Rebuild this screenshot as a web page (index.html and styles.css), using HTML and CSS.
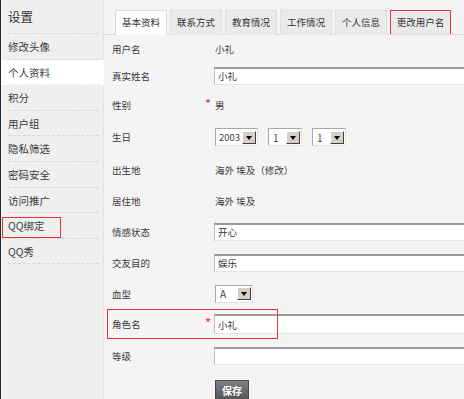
FILE: index.html
```html
<!DOCTYPE html>
<html lang="zh-CN">
  <head>
    <meta charset="UTF-8" />
    <meta name="viewport" content="width=device-width, initial-scale=1.0" />
    <title>设置 - 个人资料</title>
    <link rel="stylesheet" href="styles.css">
  </head>
  <body>
    <div class="page">
      <div class="side">
        <h2 class="side-title">设置</h2>
        <ul class="nav">
          <li><a href="#">修改头像</a></li>
          <li class="active"><a href="#">个人资料</a></li>
          <li><a href="#">积分</a></li>
          <li><a href="#">用户组</a></li>
          <li><a href="#">隐私筛选</a></li>
          <li><a href="#">密码安全</a></li>
          <li><a href="#">访问推广</a></li>
          <li class="marked"><a href="#">QQ绑定</a><span class="mark mark-nav"></span></li>
          <li><a href="#">QQ秀</a></li>
        </ul>
      </div>

      <div class="main">
        <ul class="tabs">
          <li class="tab active">基本资料</li>
          <li class="tab">联系方式</li>
          <li class="tab">教育情况</li>
          <li class="tab">工作情况</li>
          <li class="tab">个人信息</li>
          <li class="tab tab-wide tab-marked">更改用户名</li>
        </ul>

        <form class="form">
          <div class="row row-short">
            <span class="label">用户名</span>
            <span class="star"></span>
            <span class="value">小礼</span>
          </div>

          <div class="row row-short">
            <span class="label">真实姓名</span>
            <span class="star"></span>
            <input type="text" class="field" value="小礼" />
          </div>

          <div class="row">
            <span class="label">性别</span>
            <span class="star">*</span>
            <span class="value">男</span>
          </div>

          <div class="row row-tall">
            <span class="label">生日</span>
            <span class="star"></span>
            <div class="selects">
              <span class="select select-year"><span>2003</span><span class="select-btn"></span></span>
              <span class="select"><span>1</span><span class="select-btn"></span></span>
              <span class="select"><span>1</span><span class="select-btn"></span></span>
            </div>
          </div>

          <div class="row">
            <span class="label">出生地</span>
            <span class="star"></span>
            <span class="value">海外 埃及（修改）</span>
          </div>

          <div class="row">
            <span class="label">居住地</span>
            <span class="star"></span>
            <span class="value">海外 埃及</span>
          </div>

          <div class="row">
            <span class="label">情感状态</span>
            <span class="star"></span>
            <input type="text" class="field" value="开心" />
          </div>

          <div class="row">
            <span class="label">交友目的</span>
            <span class="star"></span>
            <input type="text" class="field" value="娱乐" />
          </div>

          <div class="row">
            <span class="label">血型</span>
            <span class="star"></span>
            <span class="select select-blood"><span>A</span><span class="select-btn"></span></span>
          </div>

          <div class="row row-role">
            <span class="label">角色名</span>
            <span class="star">*</span>
            <input type="text" class="field field-role" value="小礼" />
            <span class="mark mark-row"></span>
          </div>

          <div class="row row-tall">
            <span class="label">等级</span>
            <span class="star"></span>
            <input type="text" class="field" value="" />
          </div>

          <div class="actions">
            <button type="button" class="btn-save">保存</button>
          </div>
        </form>
      </div>
    </div>
  </body>
</html>
```

FILE: styles.css
```css
* {
  margin: 0;
  padding: 0;
  box-sizing: border-box;
  font-family: "Noto Sans CJK SC", "Liberation Sans", sans-serif;
}

body {
  width: 464px;
  height: 399px;
  overflow: hidden;
  background-color: #f4f4f4;
  color: #3a3a3a;
  font-size: 9.5px;
}

ul {
  list-style: none;
}

a {
  color: #3a3a3a;
  text-decoration: none;
}

.page {
  display: flex;
  height: 399px;
}

/* menu lateral */
.side {
  width: 104px;
  flex-shrink: 0;
  background-color: #efefef;
  border-left: 1px solid #2a2a2a;
  border-right: 1px solid #e2e2e2;
  font-size: 10.5px;
}

.side-title {
  height: 34px;
  line-height: 34px;
  margin: 0 4px 0 7px;
  font-size: 12.5px;
  font-weight: normal;
  color: #333;
  border-bottom: 1px dashed #d6d6d6;
}

.nav li {
  position: relative;
}

.nav li a {
  display: block;
  height: 25.6px;
  line-height: 25px;
  margin: 0 4px 0 7px;
  border-bottom: 1px dashed #d6d6d6;
}

.nav li.active {
  background-color: #fff;
  margin-right: -1px;
}

.nav li.active a {
  border-bottom-color: #eee;
}

.mark {
  position: absolute;
  border: 1px solid #e8333a;
  pointer-events: none;
}

.mark-nav {
  left: 1px;
  top: 4px;
  width: 59px;
  height: 21px;
}

/* conteúdo */
.main {
  flex: 1;
  overflow: hidden;
}

.tabs {
  display: flex;
  gap: 3px;
  height: 35px;
  padding: 10px 0 0 11px;
  border-bottom: 1px solid #dcdcdc;
}

.tab {
  width: 52px;
  height: 25px;
  line-height: 23px;
  text-align: center;
  white-space: nowrap;
  background-color: #eaeaea;
  border: 1px solid #dedede;
  border-bottom: none;
  color: #333;
}

.tab.active {
  background-color: #fff;
}

.tab-wide {
  width: 61px;
}

.tab-marked {
  border: 1px solid #e8333a;
  border-bottom: none;
  height: 24px;
}

.form {
  padding-left: 8px;
}

.row {
  position: relative;
  display: flex;
  align-items: center;
  height: 31px;
}

.row-short {
  height: 27px;
}

.row-tall {
  height: 34px;
}

.row-role {
  height: 30px;
}

.label {
  width: 93px;
  flex-shrink: 0;
}

.star {
  width: 9px;
  flex-shrink: 0;
  color: #e8333a;
  font-size: 13px;
  line-height: 1;
  margin-top: -3px;
}

.value {
  padding-left: 1px;
}

.field {
  width: 260px;
  flex-shrink: 0;
  height: 18px;
  padding: 0 3px;
  font-size: 9.5px;
  color: #333;
  background-color: #fff;
  border: 1px solid;
  border-color: #9a9a9a #e4e4e4 #e4e4e4 #bdbdbd;
  border-top-width: 2px;
}

.field-role {
  height: 20px;
}

.mark-row {
  left: -5px;
  top: 0;
  width: 171px;
  height: 30px;
}

.selects {
  display: flex;
  gap: 9px;
}

.select {
  display: inline-flex;
  align-items: center;
  justify-content: space-between;
  width: 34px;
  height: 18px;
  margin-left: 1px;
  padding: 0 1px 0 4px;
  background-color: #fff;
  border: 1px solid;
  border-color: #a8a8a8 #e2e2e2 #e2e2e2 #a8a8a8;
  font-family: "Liberation Sans", sans-serif;
  font-size: 10px;
  color: #444;
}

.select-year {
  width: 43px;
  padding-left: 3px;
  font-size: 9.5px;
}

.select-blood {
  width: 38px;
}

.select-btn {
  position: relative;
  width: 14px;
  height: 13px;
  margin-left: 2px;
  background-color: #d4d0c8;
  border: 1px solid;
  border-color: #fff #404040 #404040 #fff;
}

.select-btn::after {
  content: "";
  position: absolute;
  left: 3px;
  top: 4px;
  border-top: 4px solid #000;
  border-left: 3px solid transparent;
  border-right: 3px solid transparent;
}

.actions {
  padding: 7px 0 0 103px;
}

.btn-save {
  width: 34px;
  height: 20px;
  border: 1px solid #4a4a4a;
  background: linear-gradient(#808080, #575757);
  color: #fff;
  font-size: 10px;
  font-weight: bold;
  cursor: pointer;
}
```
